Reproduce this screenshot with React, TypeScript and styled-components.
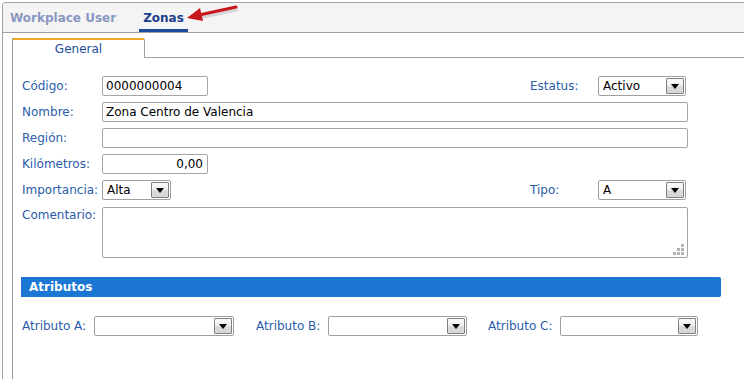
import React from "react";
import styled, { createGlobalStyle } from "styled-components";

const GlobalStyle = createGlobalStyle`
  html, body {
    margin: 0;
    padding: 0;
    background: #ffffff;
    font-family: "DejaVu Sans", Verdana, sans-serif;
    font-size: 12px;
  }
`;

const Frame = styled.div`
  margin: 2px 0 0 2px;
  height: 377px;
  box-sizing: border-box;
  border-top: 1px solid #a4a4a4;
  border-left: 1px solid #a4a4a4;
  border-top-left-radius: 4px;
  overflow: hidden;
  display: flex;
  flex-direction: column;
`;

const TopTabs = styled.div`
  height: 29px;
  flex: none;
  display: flex;
  align-items: stretch;
  gap: 19px;
  padding-left: 3px;
  background: #f4f4f4;
  border-bottom: 1px solid #a0a0a0;
`;

const TopTab = styled.div<{ $active?: boolean }>`
  display: flex;
  align-items: center;
  padding: 3px 4px 0;
  box-sizing: border-box;
  font-weight: bold;
  font-size: 12px;
  color: ${(p) => (p.$active ? "#1b3f8b" : "#8898c2")};
  border-bottom: 3px solid ${(p) => (p.$active ? "#1e4a9c" : "transparent")};
`;

const Arrow = styled.svg`
  margin: 1px 0 0 -21px;
  flex: none;
`;

const Body = styled.div`
  flex: 1;
  padding: 5px 0 0 9px;
  display: flex;
`;

const Panel = styled.div`
  flex: 1;
  border-left: 1px solid #9c9c9c;
  display: flex;
  flex-direction: column;
`;

const PanelTabs = styled.div`
  display: flex;
  height: 20px;
`;

const PanelTab = styled.div`
  width: 132px;
  box-sizing: border-box;
  border-top: 2px solid #f5a623;
  border-right: 1px solid #9aa2a2;
  border-top-right-radius: 2px;
  display: flex;
  justify-content: center;
  align-items: center;
  color: #1e4a9c;
  font-size: 12px;
  padding-bottom: 1px;
`;

const PanelTabRest = styled.div`
  flex: 1;
  border-bottom: 1px solid #9aa8a8;
`;

const Form = styled.div`
  padding: 18px 0 0 9px;
  width: 666px;
  display: flex;
  flex-direction: column;
`;

const Row = styled.div<{ $tall?: boolean }>`
  display: flex;
  align-items: ${(p) => (p.$tall ? "flex-start" : "center")};
  min-height: 20px;
  margin-bottom: 6px;
  margin-top: ${(p) => (p.$tall ? "1px" : "0")};
`;

const Label = styled.div<{ $w?: number }>`
  width: ${(p) => p.$w ?? 80}px;
  flex: none;
  color: #2b5bab;
  font-size: 12px;
  white-space: nowrap;
`;

const TallLabel = styled(Label)`
  padding-top: 1px;
`;

const Spacer = styled.div<{ $w?: number }>`
  flex: ${(p) => (p.$w ? "none" : "1")};
  width: ${(p) => (p.$w ? `${p.$w}px` : "auto")};
`;

const Input = styled.div<{ $w?: number; $right?: boolean }>`
  width: ${(p) => (p.$w ? `${p.$w}px` : "auto")};
  flex: ${(p) => (p.$w ? "none" : "1")};
  height: 20px;
  box-sizing: border-box;
  border: 1px solid #a5a5a5;
  border-radius: 2px;
  display: flex;
  align-items: center;
  justify-content: ${(p) => (p.$right ? "flex-end" : "flex-start")};
  padding: 0 4px 0 3px;
  color: #000;
  font-size: 12px;
  white-space: nowrap;
`;

const CommentBox = styled.div`
  flex: 1;
  height: 51px;
  box-sizing: border-box;
  border: 1px solid #a5a5a5;
  border-radius: 2px;
  display: flex;
  align-items: flex-end;
  justify-content: flex-end;
  padding: 0 3px 2px 0;
`;

const SelectBox = styled.div<{ $w: number }>`
  width: ${(p) => p.$w}px;
  flex: none;
  height: 20px;
  box-sizing: border-box;
  border: 1px solid #a0a0a0;
  border-radius: 2px;
  display: flex;
  align-items: center;
  padding-left: 4px;
  color: #000;
  font-size: 12px;
`;

const DropButton = styled.div`
  margin-left: auto;
  margin-right: 1px;
  width: 18px;
  height: 16px;
  box-sizing: border-box;
  border: 1px solid #808080;
  border-radius: 1px;
  background: linear-gradient(#fbfbfb 0%, #f0f0f0 45%, #dadada 55%, #d6d6d6 100%);
  display: flex;
  align-items: center;
  justify-content: center;
`;

const Triangle = styled.div`
  width: 0;
  height: 0;
  border-left: 4px solid transparent;
  border-right: 4px solid transparent;
  border-top: 5px solid #000;
  margin-top: 1px;
`;

const SectionBar = styled.div`
  margin: 13px 0 0 -1px;
  width: 700px;
  height: 20px;
  box-sizing: border-box;
  background: #1b77d3;
  border-top-right-radius: 2px;
  border-bottom-right-radius: 2px;
  color: #fff;
  font-weight: bold;
  font-size: 12px;
  display: flex;
  align-items: center;
  padding-left: 8px;
`;

const AttrRow = styled.div`
  display: flex;
  align-items: center;
  margin-top: 19px;
`;

const AttrField = styled.div<{ $gap?: number }>`
  display: flex;
  align-items: center;
  gap: 6px;
  margin-left: ${(p) => p.$gap ?? 0}px;
`;

const AttrLabel = styled.div`
  width: 66px;
  color: #2b5bab;
  font-size: 12px;
  white-space: nowrap;
`;

const Select: React.FC<{ w: number; value?: string }> = ({ w, value }) => (
  <SelectBox $w={w}>
    {value}
    <DropButton>
      <Triangle />
    </DropButton>
  </SelectBox>
);

const Grip: React.FC = () => (
  <svg width="11" height="11" viewBox="0 0 11 11">
    {[
      [8, 0],
      [4, 4],
      [8, 4],
      [0, 8],
      [4, 8],
      [8, 8],
    ].map(([x, y], i) => (
      <rect key={i} x={x} y={y} width="3" height="3" fill="#b4b4b4" />
    ))}
  </svg>
);

const App: React.FC = () => {
  return (
    <>
      <GlobalStyle />
      <Frame>
        <TopTabs>
          <TopTab>Workplace User</TopTab>
          <TopTab $active>Zonas</TopTab>
          <Arrow width="54" height="21" viewBox="0 0 54 21">
            <line x1="52" y1="5" x2="15" y2="13" stroke="#9a9a9a" strokeOpacity="0.35" strokeWidth="4" />
            <line x1="50" y1="3" x2="13" y2="11" stroke="#c8161d" strokeWidth="3" strokeLinecap="round" />
            <polygon points="1,14 14,4 17,17" fill="#c8161d" />
          </Arrow>
        </TopTabs>
        <Body>
          <Panel>
            <PanelTabs>
              <PanelTab>General</PanelTab>
              <PanelTabRest />
            </PanelTabs>
            <Form>
              <Row>
                <Label>Código:</Label>
                <Input $w={106}>0000000004</Input>
                <Spacer />
                <Label $w={68}>Estatus:</Label>
                <Select w={88} value="Activo" />
                <Spacer $w={2} />
              </Row>
              <Row>
                <Label>Nombre:</Label>
                <Input>Zona Centro de Valencia</Input>
              </Row>
              <Row>
                <Label>Región:</Label>
                <Input />
              </Row>
              <Row>
                <Label>Kilómetros:</Label>
                <Input $w={106} $right>
                  0,00
                </Input>
              </Row>
              <Row>
                <Label>Importancia:</Label>
                <Select w={69} value="Alta" />
                <Spacer />
                <Label $w={68}>Tipo:</Label>
                <Select w={88} value="A" />
                <Spacer $w={2} />
              </Row>
              <Row $tall>
                <TallLabel>Comentario:</TallLabel>
                <CommentBox>
                  <Grip />
                </CommentBox>
              </Row>
              <SectionBar>Atributos</SectionBar>
              <AttrRow>
                <AttrField>
                  <AttrLabel>Atributo A:</AttrLabel>
                  <Select w={140} />
                </AttrField>
                <AttrField $gap={22}>
                  <AttrLabel>Atributo B:</AttrLabel>
                  <Select w={139} />
                </AttrField>
                <AttrField $gap={21}>
                  <AttrLabel>Atributo C:</AttrLabel>
                  <Select w={138} />
                </AttrField>
              </AttrRow>
            </Form>
          </Panel>
        </Body>
      </Frame>
    </>
  );
};

export default App;
